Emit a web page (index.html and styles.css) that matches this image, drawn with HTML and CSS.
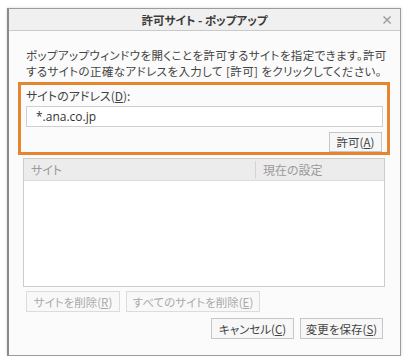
FILE: index.html
```html
<!DOCTYPE html>
<html lang="ja">
<head>
    <meta charset="UTF-8">
    <title>許可サイト - ポップアップ</title>
    <link rel="stylesheet" href="styles.css">
</head>
<body>
    <div class="dialog">
        <header class="title-bar">
            <span class="title">許可サイト - ポップアップ</span>
            <span class="close">×</span>
        </header>

        <p class="description">ポップアップウィンドウを開くことを許可するサイトを指定できます。許可<br>するサイトの正確なアドレスを入力して [許可] をクリックしてください。</p>

        <section class="address-box">
            <label for="address">サイトのアドレス(<u>D</u>):</label>
            <input type="text" id="address" value="*.ana.co.jp">
            <div class="allow-row">
                <button class="btn">許可(<u>A</u>)</button>
            </div>
        </section>

        <section class="site-table">
            <div class="table-head">
                <div class="col-site">サイト</div>
                <div class="col-status">現在の設定</div>
            </div>
            <div class="table-body"></div>
        </section>

        <div class="remove-row">
            <button class="btn" disabled>サイトを削除(<u>R</u>)</button>
            <button class="btn" disabled>すべてのサイトを削除(<u>E</u>)</button>
        </div>

        <div class="footer-row">
            <button class="btn">キャンセル(<u>C</u>)</button>
            <button class="btn">変更を保存(<u>S</u>)</button>
        </div>
    </div>
</body>
</html>
```

FILE: styles.css
```css
body {
    margin: 0;
    background-color: #ffffff;
    font-family: "Noto Sans CJK JP", "Noto Sans", sans-serif;
    font-feature-settings: "palt";
    font-size: 12px;
    color: #444444;
}

.dialog {
    box-sizing: border-box;
    width: 394px;
    height: 348px;
    margin: 8px 0 0 7px;
    background-color: #fbfbfb;
    border: 1px solid #9c9c9c;
    border-left: 2px solid #8a8a8a;
    box-shadow: 0 0 3px rgba(0, 0, 0, 0.15);
    display: flex;
    flex-direction: column;
}

.title-bar {
    flex-shrink: 0;
    height: 21px;
    background-color: #f0f0f0;
    border-bottom: 1px solid #c9c9c9;
    position: relative;
    display: flex;
    align-items: center;
    justify-content: center;
}

.title {
    font-size: 11.5px;
    font-weight: bold;
    color: #3c3c3c;
}

.close {
    position: absolute;
    right: 7px;
    top: 2px;
    font-size: 12px;
    font-weight: bold;
    color: #999999;
}

.description {
    margin: 16px 0 0 17px;
    font-size: 11.5px;
    line-height: 16px;
    letter-spacing: 0.4px;
    white-space: nowrap;
}

.address-box {
    flex-shrink: 0;
    box-sizing: border-box;
    width: 372px;
    height: 73px;
    margin: 3px 0 0 9px;
    padding: 3px 4px 0 5px;
    border: 3px solid #e5852f;
    display: flex;
    flex-direction: column;
}

.address-box label {
    line-height: 15px;
}

.address-box input {
    box-sizing: border-box;
    height: 21px;
    margin-top: 3px;
    padding: 0 0 0 9px;
    border: 1px solid #cfcfcf;
    background-color: #ffffff;
    font-family: "Open Sans", "Noto Sans CJK JP", sans-serif;
    font-size: 12px;
    color: #333333;
    outline: none;
}

.allow-row {
    display: flex;
    justify-content: flex-end;
    margin-top: 5px;
    padding-right: 1px;
}

.allow-row .btn {
    width: 53px;
    height: 20px;
}

.btn {
    flex-shrink: 0;
    box-sizing: border-box;
    height: 21px;
    padding: 0 4px;
    border: 1px solid #c6c6c6;
    background-color: #f7f7f7;
    font-family: "Noto Sans CJK JP", "Noto Sans", sans-serif;
    font-feature-settings: "palt";
    font-size: 11.5px;
    color: #444444;
    white-space: nowrap;
}

.btn:disabled {
    color: #aaaaaa;
    border-color: #dcdcdc;
    background-color: #f8f8f8;
}

.site-table {
    flex-shrink: 0;
    box-sizing: border-box;
    width: 362px;
    height: 129px;
    margin: 3px 0 0 14px;
    border: 1px solid #cdcdcd;
    background-color: #ffffff;
    display: flex;
    flex-direction: column;
}

.table-head {
    display: flex;
    height: 21px;
    background-color: #ececec;
    border-bottom: 1px solid #dcdcdc;
    color: #9a9a9a;
}

.col-site {
    box-sizing: border-box;
    width: 232px;
    padding-left: 7px;
    margin: 2px 0;
    line-height: 17px;
    border-right: 1px solid #d4d4d4;
}

.col-status {
    padding-left: 7px;
    line-height: 21px;
}

.table-body {
    flex: 1;
}

.remove-row {
    flex-shrink: 0;
    display: flex;
    gap: 6px;
    margin: 4px 0 0 17px;
}

.remove-row .btn:first-child {
    width: 94px;
}

.remove-row .btn:last-child {
    width: 134px;
}

.footer-row {
    flex-shrink: 0;
    display: flex;
    justify-content: flex-end;
    gap: 6px;
    margin: 6px 17px 0 0;
}

.footer-row .btn {
    width: 83px;
}
```
